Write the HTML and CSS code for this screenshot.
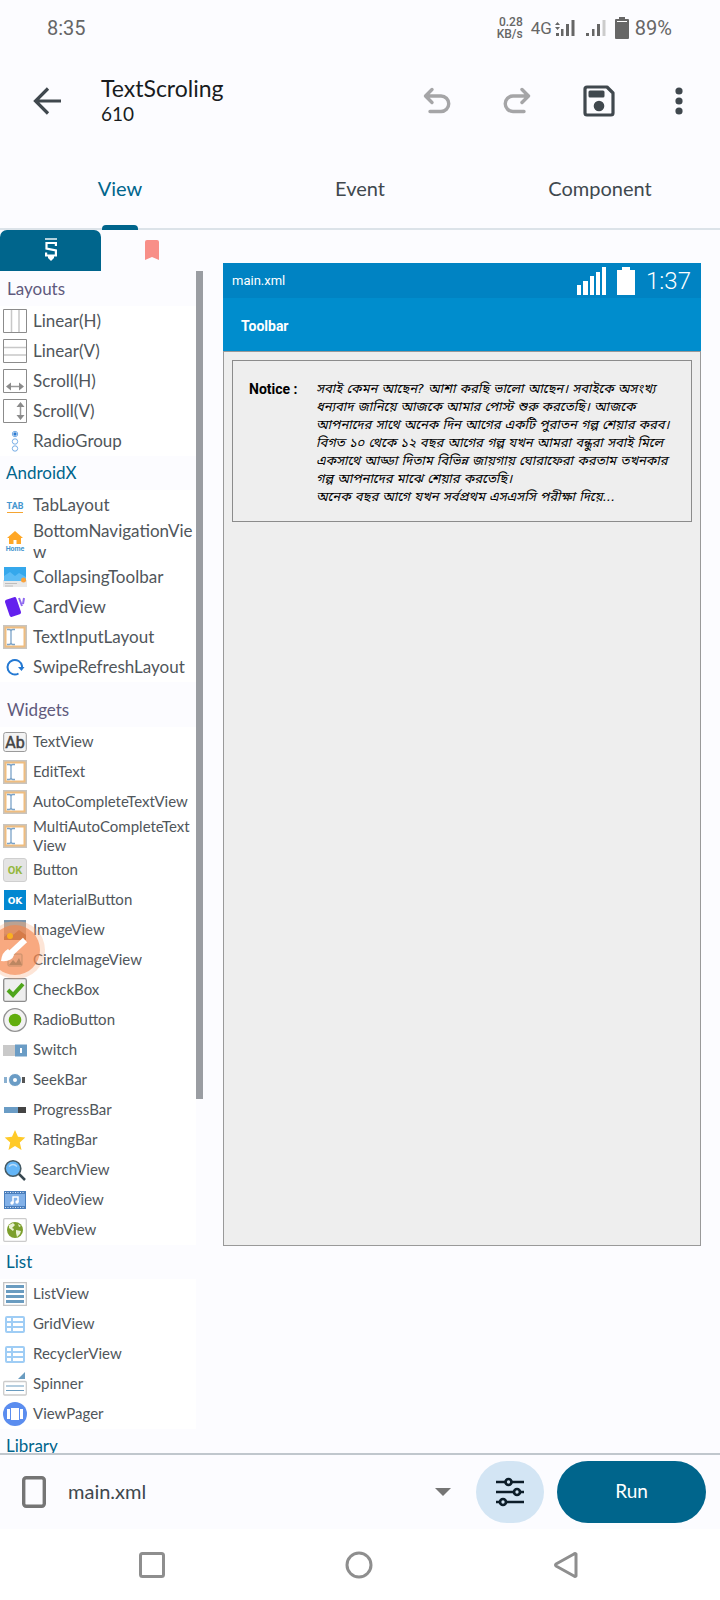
FILE: index.html
```html
<!DOCTYPE html>
<html lang="en">
<head>
<meta charset="utf-8">
<meta name="viewport" content="width=device-width, initial-scale=1">
<title>TextScroling</title>
<link rel="stylesheet" href="styles.css">
</head>
<body>
<svg class="defs" aria-hidden="true">
  <symbol id="field" viewBox="0 0 24 24"><path fill="#fff" stroke="#c9c5bf" stroke-width="2" d="M1 1h22v22H1z"/><path fill="none" stroke="#efbd80" stroke-width="2" d="M2.500 2.500h19v19h-19z"/><path fill="none" stroke="#7ba3c8" stroke-width="1.300" d="M4 4.500h2q2 0 2 2 0-2 2-2h2M8 6v12M4 19.500h2q2 0 2-2 0 2 2 2h2"/></symbol>
  <symbol id="grid" viewBox="0 0 24 24"><rect x="2" y="4" width="20" height="17" rx="2" fill="#9fcdf5"/><path fill="#fff" d="M4 6h4v3H4zM10 6h10v3H10zM4 11h4v3H4zM10 11h10v3H10zM4 16h4v3H4zM10 16h10v3H10z"/></symbol>
</svg>
<div class="screen">
  <header class="status">
    <span class="clock">8:35</span>
    <div class="status-right">
      <span class="speed">0.28<br>KB/s</span>
      <span class="net">4G</span>
      <svg width="20" height="18" viewBox="0 0 20 18"><path fill="#666" d="M2.500 3 0 6h5zM0 8h5l-2.500 3zM1 14h3v3H1zM6 10h2.500v7H6zM11 5h3v12h-3zM16.500 1h3v16h-3z"/></svg>
      <svg class="sim2" width="20" height="18" viewBox="0 0 20 18"><path fill="#666" d="M0 14h3v3H0zM6 10h2.500v7H6zM11 5h3v12h-3z"/><path fill="#ccc" d="M16.500 1h3v16h-3z"/></svg>
      <svg class="bat" width="14" height="22" viewBox="0 0 14 22"><path fill="#666" d="M4 0h6v2h3q1 0 1 1v18q0 1-1 1H1q-1 0-1-1V3q0-1 1-1h3z"/><path fill="#fff" d="M2 4h10v1H2z"/></svg>
      <span class="pct">89%</span>
    </div>
  </header>
  <div class="appbar">
    <button class="icon-btn back" aria-label="Back"><svg width="28" height="28" viewBox="0 0 28 28"><path fill="none" stroke="#40484e" stroke-width="3.200" d="M28 14H3M15 1.500 2.500 14 15 26.500"/></svg></button>
    <div class="title"><h1>TextScroling</h1><p>610</p></div>
    <div class="actions">
      <button class="icon-btn" aria-label="Undo"><svg width="28" height="28" viewBox="0 0 28 28"><path fill="none" stroke="#a5a5a7" stroke-width="3.400" stroke-linecap="round" stroke-linejoin="round" d="M9 2.500 2.500 9 9 15.500M3 9h15a7.500 7.500 0 0 1 0 15.500H7"/></svg></button>
      <button class="icon-btn" aria-label="Redo"><svg width="28" height="28" viewBox="0 0 28 28"><path fill="none" stroke="#a5a5a7" stroke-width="3.400" stroke-linecap="round" stroke-linejoin="round" d="M19 2.500 25.500 9 19 15.500M25 9H10a7.500 7.500 0 0 0 0 15.500h11"/></svg></button>
      <button class="icon-btn" aria-label="Save"><svg width="32" height="32" viewBox="0 0 32 32"><path fill="none" stroke="#40484e" stroke-width="3.200" stroke-linejoin="round" d="M4 2h20l6 6v20q0 2-2 2H4q-2 0-2-2V4q0-2 2-2z"/><rect x="5.500" y="5.500" width="16" height="7" rx="1.500" fill="#40484e"/><circle cx="16" cy="21" r="5.300" fill="#40484e"/></svg></button>
      <button class="icon-btn" aria-label="More"><svg width="8" height="28" viewBox="0 0 8 28"><g fill="#40484e"><circle cx="4" cy="4" r="3.600"/><circle cx="4" cy="14" r="3.600"/><circle cx="4" cy="24" r="3.600"/></g></svg></button>
    </div>
  </div>
  <nav class="tabs">
    <button class="tab active">View</button>
    <button class="tab">Event</button>
    <button class="tab">Component</button>
  </nav>
  <main class="work">
    <aside class="palette">
      <div class="ptabs">
        <button class="ptab on" aria-label="Components"><svg width="12" height="24" viewBox="0 0 12 24"><path fill="#b3d1dd" d="M0 0h12v2H0z"/><path fill="none" stroke="#fff" stroke-width="2.200" d="M10.900 8V5H1.500v5.500l9.400 2v5H1.100v-3"/><path fill="#fff" d="M3 18h6v2l-3 3-3-3z"/></svg></button>
        <button class="ptab" aria-label="Favorites"><svg width="14" height="20" viewBox="0 0 14 20"><path fill="#f88f88" d="M2 0h10q2 0 2 2v18l-7-3-7 3V2q0-2 2-2z"/></svg></button>
      </div>
      <div class="scroll">
        <div class="lists">
        <h2 class="plum">Layouts</h2>
        <ul>
          <li><svg viewBox="0 0 24 24"><path fill="#fff" stroke="#8b8b8b" d="M.5.5h23v23H.5z"/><path stroke="#c8c8c8" stroke-width="1.500" d="M8.500 1v22M16 1v22"/></svg><button>Linear(H)</button></li>
          <li><svg viewBox="0 0 24 24"><path fill="#fff" stroke="#8b8b8b" d="M.5.5h23v23H.5z"/><path stroke="#c8c8c8" stroke-width="1.500" d="M1 8.500h22M1 16h22"/></svg><button>Linear(V)</button></li>
          <li><svg viewBox="0 0 24 24"><path fill="#fff" stroke="#8b8b8b" d="M.5.5h23v23H.5z"/><path stroke="#999" stroke-width="1.500" d="M5 17.500h14"/><path fill="#8b8b8b" d="m3 17.500 5-4v8zM21 17.500l-5-4v8z"/></svg><button>Scroll(H)</button></li>
          <li><svg viewBox="0 0 24 24"><path fill="#fff" stroke="#8b8b8b" d="M.5.5h23v23H.5z"/><path stroke="#999" stroke-width="1.500" d="M17.500 5v14"/><path fill="#8b8b8b" d="m17.500 3-4 5h8zM17.500 21l-4-5h8z"/></svg><button>Scroll(V)</button></li>
          <li><svg viewBox="0 0 24 24"><g fill="none" stroke="#78aee6"><circle cx="12" cy="5" r="2.700"/><circle cx="12" cy="12.500" r="2.700"/><circle cx="12" cy="19.500" r="2.700"/></g><circle cx="12" cy="5" r="1.700" fill="#2878d0"/></svg><button>RadioGroup</button></li>
        </ul>
        <h2>AndroidX</h2>
        <ul>
          <li><svg viewBox="0 0 24 24"><text x="12" y="16" text-anchor="middle" class="t-tab">TAB</text><path fill="#f5a532" d="M4 19h16v1H4z"/></svg><button>TabLayout</button></li>
          <li class="tall"><svg viewBox="0 0 24 24"><path fill="#ffa726" d="m12 2 8 7h-2v6h-4.500v-4h-3v4H6V9H4z"/><text x="12" y="22" text-anchor="middle" class="t-home">Home</text></svg><button>BottomNavigationVie<br>w</button></li>
          <li><svg viewBox="0 0 24 24"><path fill="#e8e8e8" d="M0 15h24v7H0z"/><path fill="#35a8ec" d="M1 2h22v14H1z"/><path fill="#5cbcf5" d="m1 11 6-4 5 4 4-3 7 4v4H1z"/><circle cx="20.500" cy="15" r="2.500" fill="#f9a23b"/><path fill="#bdbdbd" d="M2 18h12v1H2zM2 20.500h8v1H2z"/></svg><button>CollapsingToolbar</button></li>
          <li><svg viewBox="0 0 24 24"><rect x="4" y="3" width="12" height="18" rx="2" fill="#6320ee" transform="rotate(-19 10 12)"/><path fill="none" stroke="#8e68f0" stroke-width="2" d="m16 3 3 8M21 3l-1 6"/></svg><button>CardView</button></li>
          <li><svg><use href="#field"/></svg><button>TextInputLayout</button></li>
          <li><svg viewBox="0 0 24 24"><path fill="none" stroke="#2378d2" stroke-width="2" d="M15.500 18.500A7.300 7.300 0 1 1 19 11v2"/><path fill="#2378d2" d="M15 12h6.500l-3 4z"/></svg><button>SwipeRefreshLayout</button></li>
        </ul>
        <h2 class="plum spaced">Widgets</h2>
        <ul class="small">
          <li><svg viewBox="0 0 24 24"><rect x=".7" y="2.500" width="22.600" height="19" rx="2" fill="#f3f3f3" stroke="#9a9a9a"/><text x="12" y="18" text-anchor="middle" class="t-ab">Ab</text></svg><button>TextView</button></li>
          <li><svg><use href="#field"/></svg><button>EditText</button></li>
          <li><svg><use href="#field"/></svg><button>AutoCompleteTextView</button></li>
          <li class="tall"><svg><use href="#field"/></svg><button>MultiAutoCompleteText<br>View</button></li>
          <li><svg viewBox="0 0 24 24"><rect x=".5" y=".5" width="23" height="23" rx="2.500" fill="#e4e4e4" stroke="#cfcfcf"/><text x="12" y="16" text-anchor="middle" class="t-ok">OK</text></svg><button>Button</button></li>
          <li><svg viewBox="0 0 24 24"><path fill="#0288d1" d="M1 2h22v20H1z"/><text x="12" y="16" text-anchor="middle" class="t-ok2">OK</text></svg><button>MaterialButton</button></li>
          <li><svg viewBox="0 0 24 24"><path fill="#7b95ab" d="M1 2h22v20H1z"/><path fill="#a4a3a0" d="M1 4h22v12H1z"/><path fill="#805838" d="m1 19 5-4 4 2 6-5 7 5v5H1z"/></svg><button>ImageView</button></li>
          <li><svg viewBox="0 0 24 24"><rect x="5" y="6" width="14" height="12" rx="1" fill="#d8eef4" stroke="#4a9fae"/><path fill="#258394" d="m6 17 4-5 3 3 3-5 3 7z"/></svg><button>CircleImageView</button></li>
          <li><svg viewBox="0 0 24 24"><rect x=".7" y=".7" width="22.600" height="22.600" rx="1.500" fill="#eee" stroke="#8d8d8d" stroke-width="1.300"/><path fill="none" stroke="#4fa51c" stroke-width="4" d="m5 12 5 5L20 6"/></svg><button>CheckBox</button></li>
          <li><svg viewBox="0 0 24 24"><circle cx="12" cy="12" r="11.300" fill="#f2f2f2" stroke="#929292" stroke-width="1.300"/><circle cx="12" cy="12" r="6.300" fill="#61ad0d"/></svg><button>RadioButton</button></li>
          <li><svg viewBox="0 0 24 24"><path fill="#c9c9c9" d="M0 7h12v11H0z"/><path fill="#6a9cc5" d="M12 6.500h12v12H12z"/><path fill="#fff" d="M17 10h2v5h-2z"/></svg><button>Switch</button></li>
          <li><svg viewBox="0 0 24 24"><path fill="#8ab0d0" d="M1 9h3v6H1z"/><path fill="#555" d="M19 9h3v6h-3z"/><circle cx="12" cy="12" r="6.500" fill="#6a9cc5" stroke="#fff"/><circle cx="12" cy="12" r="2" fill="#fff"/></svg><button>SeekBar</button></li>
          <li><svg viewBox="0 0 24 24"><path fill="#6a9cc5" d="M1 9h14v6H1z"/><path fill="#444" d="M15 9h8v6h-8z"/></svg><button>ProgressBar</button></li>
          <li><svg viewBox="0 0 24 24"><path fill="#ffca28" d="m12 2 3 6.800 7.300.7-5.500 4.900L18.500 22 12 18l-6.500 4 1.700-7.600L1.700 9.500 9 8.800z"/></svg><button>RatingBar</button></li>
          <li><svg viewBox="0 0 24 24"><path stroke="#37474f" stroke-width="2.500" d="m15 15 7 7"/><circle cx="10" cy="10.500" r="7.800" fill="#64b5f6" stroke="#455a64" stroke-width="1.600"/><path fill="none" stroke="#bbdefb" stroke-width="1.300" d="M6 8.500q4-4 8 0"/></svg><button>SearchView</button></li>
          <li><svg viewBox="0 0 24 24"><path fill="#4a7ebc" d="M1 3h22v18H1z"/><path fill="#82b1e8" d="M2 6h20v12H2z"/><path stroke="#dce9f7" stroke-dasharray="1 1.500" d="M2 4.500h20M2 19.500h20"/><path fill="none" stroke="#fff" stroke-width="1.500" d="M10 15V9h5v5"/><circle cx="9" cy="15" r="1.700" fill="#fff"/><circle cx="14" cy="14" r="1.700" fill="#fff"/></svg><button>VideoView</button></li>
          <li><svg viewBox="0 0 24 24"><rect x=".7" y=".7" width="22.600" height="22.600" rx="1" fill="#fff" stroke="#ccc" stroke-width="1.300"/><circle cx="12" cy="12" r="8" fill="#7c9f2c"/><path fill="#eaf2d4" d="m6 7 4-2 2 2-3 3 2 1-1 2-4-3zM13 12l5 1-1 3-3 3-1-4zM15 6l3 2-2 1z"/></svg><button>WebView</button></li>
        </ul>
        <h2>List</h2>
        <ul class="small">
          <li><svg viewBox="0 0 24 24"><path fill="#fff" stroke="#c4c4c4" stroke-width="1.300" d="M.7.7h22.600v22.600H.7z"/><path stroke="#6a9cc0" stroke-width="3" d="M3 4.500h18M3 9.500h18M3 14.500h18M3 19.500h18"/></svg><button>ListView</button></li>
          <li><svg><use href="#grid"/></svg><button>GridView</button></li>
          <li><svg><use href="#grid"/></svg><button>RecyclerView</button></li>
          <li><svg viewBox="0 0 24 24"><path fill="#6a9cc0" d="M22 0v7h-7z"/><rect x=".7" y="9.500" width="22.600" height="13.500" rx="1" fill="#fff" stroke="#ccc" stroke-width="1.300"/><path stroke="#6a9cc0" stroke-width="1.200" d="M3 14h18M3 18.500h18"/></svg><button>Spinner</button></li>
          <li><svg viewBox="0 0 24 24"><circle cx="12" cy="12" r="12" fill="#5b8def"/><path fill="#fff" d="M4 7h3v10H4zM8 6h8v12H8zM17 7h3v10h-3z"/></svg><button>ViewPager</button></li>
        </ul>
        <h2>Library</h2>
        </div>
        <div class="track"><div class="thumb"></div></div>
      </div>
    </aside>
    <section class="canvas">
      <div class="device">
        <div class="dstatus">
          <span class="dfile">main.xml</span>
          <svg width="29" height="28" viewBox="0 0 29 28"><path fill="#fff" d="M0 18h4v10H0zM6 14h5v14H6zM13 9h4v19h-4zM19 5h4v23h-4zM25 0h4v28h-4z"/></svg>
          <svg width="18" height="28" viewBox="0 0 18 28"><path fill="#fff" d="M5 0h8v3h5v25H0V3h5z"/></svg>
          <span class="dclock">1:37</span>
        </div>
        <div class="dtoolbar">Toolbar</div>
        <div class="dbody">
          <div class="notice">
            <strong>Notice :</strong>
            <p lang="bn">সবাই কেমন আছেন? আশা করছি ভালো আছেন। সবাইকে অসংখ্য<br>ধন্যবাদ জানিয়ে আজকে আমার পোস্ট শুরু করতেছি। আজকে<br>আপনাদের সাথে অনেক দিন আগের একটি পুরাতন গল্প শেয়ার করব।<br>বিগত ১০ থেকে ১২ বছর আগের গল্প যখন আমরা বন্ধুরা সবাই মিলে<br>একসাথে আড্ডা দিতাম বিভিন্ন জায়গায় ঘোরাফেরা করতাম তখনকার<br>গল্প আপনাদের মাঝে শেয়ার করতেছি।<br>অনেক বছর আগে যখন সর্বপ্রথম এসএসসি পরীক্ষা দিয়ে...</p>
          </div>
        </div>
      </div>
    </section>
    <svg class="bubble" width="46" height="58" viewBox="0 0 46 58" aria-hidden="true"><circle cx="16" cy="29" r="29" fill="#f9a070" opacity=".28"/><circle cx="15" cy="29" r="25" fill="#f5854a" opacity=".62"/><circle cx="10" cy="15" r="3" fill="#fbb020"/><path stroke="#fff" stroke-width="6" d="M25 19 11 32"/><path fill="#fff" d="m8 28 6 6q-2 7-13 6 1-9 7-12z"/></svg>
  </main>
  <footer class="bottom">
    <svg width="24" height="32" viewBox="0 0 24 32"><rect x="1.700" y="1.700" width="20.600" height="28.600" rx="2.500" fill="none" stroke="#757575" stroke-width="3.400"/></svg>
    <select class="file" aria-label="File"><option>main.xml</option></select>
    <svg class="caret" width="16" height="8" viewBox="0 0 16 8"><path fill="#757575" d="M0 0h16L8 8z"/></svg>
    <button class="config" aria-label="Options"><svg width="30" height="30" viewBox="0 0 30 30"><g fill="#d3e5f4" stroke="#0c1d29" stroke-width="2.700"><path d="M1 5h28M1 15h28M1 25h28"/><circle cx="13.500" cy="5" r="3"/><circle cx="22" cy="15" r="3"/><circle cx="8" cy="25" r="3"/></g></svg></button>
    <button class="run">Run</button>
  </footer>
  <nav class="sysnav">
    <button aria-label="Recents"><svg width="28" height="28" viewBox="0 0 28 28"><rect x="2.500" y="2.500" width="23" height="23" rx="2" fill="none" stroke="#8e8e8e" stroke-width="3"/></svg></button>
    <button aria-label="Home"><svg width="28" height="28" viewBox="0 0 28 28"><circle cx="14" cy="14" r="12" fill="none" stroke="#8e8e8e" stroke-width="3"/></svg></button>
    <button aria-label="Back"><svg width="28" height="28" viewBox="0 0 28 28"><path fill="none" stroke="#8e8e8e" stroke-width="3" stroke-linejoin="round" d="M24 3v22q-1 1-2 0L4 15q-1-1 0-2L22 3q1-1 2 0z"/></svg></button>
  </nav>
</div>
</body>
</html>
```
FILE: styles.css
```css
* { box-sizing: border-box; }
body { margin: 0; background: #fcfcff; font-family: Lato, "Noto Sans", sans-serif; color: #40484e; }
button, select { font: inherit; color: inherit; border: 0; background: none; padding: 0; margin: 0; }
h1, h2, p, ul { margin: 0; padding: 0; font-weight: 400; }
svg { display: block; flex: none; }
.defs { width: 0; height: 0; position: absolute; }
.screen { height: 100vh; display: flex; flex-direction: column; }

.status { flex: none; height: 56px; display: flex; justify-content: space-between; align-items: center; padding: 0 48px 0 47px; font-family: Roboto, sans-serif; font-size: 20px; color: #666; }
.status-right { display: flex; align-items: center; }
.speed { font-size: 12px; line-height: 12px; font-weight: 500; text-align: right; margin-right: 8px; }
.net { font-size: 17px; margin-right: 3px; }
.sim2 { margin-left: 11px; }
.bat { margin: 0 6px 0 9px; }

.appbar { flex: none; height: 90px; display: flex; align-items: center; padding: 0 37px 0 33px; }
.icon-btn { display: flex; justify-content: center; align-items: center; }
.title { flex: 1; margin-left: 40px; padding-bottom: 2px; color: #191c1e; }
.title h1 { font-size: 23px; line-height: 28px; }
.title p { font-size: 19px; line-height: 24px; }
.actions { display: flex; align-items: center; gap: 52px; }
.actions .icon-btn:last-child { margin-left: 8px; }

.tabs { flex: none; height: 84px; display: grid; grid-template-columns: repeat(3, 1fr); border-bottom: 2px solid #dce3e9; }
.tab { font-size: 20px; position: relative; padding-top: 2px; }
.tab.active { color: #00658c; }
.tab.active::after { content: ""; position: absolute; left: 50%; bottom: -2px; width: 36px; height: 5px; margin-left: -18px; border-radius: 4px 4px 0 0; background: #00658c; }

.work { flex: 1; min-height: 0; display: flex; overflow: hidden; position: relative; }
.palette { flex: none; width: 203px; display: flex; flex-direction: column; }
.ptabs { flex: none; height: 41px; display: grid; grid-template-columns: 1fr 1fr; padding-right: 1px; }
.ptab { display: flex; justify-content: center; align-items: center; border-radius: 7px 7px 0 0; padding-bottom: 1px; }
.ptab.on { background: #00658c; }
.scroll { flex: 1; min-height: 0; display: flex; overflow: hidden; }
.lists { flex: 1; min-width: 0; }
.track { width: 7px; flex: none; }
.thumb { height: 828px; background: #9a9da2; }
h2 { font-size: 17px; line-height: 34px; padding-left: 6px; color: #00658c; }
h2.plum { color: #605a7d; line-height: 35px; padding-left: 7px; }
h2.spaced { padding-top: 10px; }
ul { list-style: none; background: #fff; }
li { height: 30px; display: flex; align-items: center; gap: 6px; padding-left: 3px; white-space: nowrap; }
li svg { width: 24px; height: 24px; }
li button { font-size: 17px; line-height: 21px; text-align: left; color: #50565b; padding-bottom: 2px; }
li.tall { height: 42px; }
li.tall button { padding-bottom: 0; }
.small button { font-size: 15px; line-height: 19px; }
.small li.tall { height: 38px; }
.t-tab { font: bold 9px Roboto, sans-serif; fill: #4596cf; }
.t-home { font: bold 7px Roboto, sans-serif; fill: #4596cf; }
.t-ab { font: 16px Roboto, sans-serif; fill: #444; stroke: #444; stroke-width: 0.5; }
.t-ok { font: bold 11px Roboto, sans-serif; fill: #95b83f; }
.t-ok2 { font: bold 9px "DejaVu Sans", sans-serif; fill: #fff; }
.bubble { position: absolute; left: 0; top: 691px; }

.canvas { flex: 1; min-width: 0; padding: 33px 19px 207px 20px; display: flex; }
.device { flex: 1; min-width: 0; display: flex; flex-direction: column; font-family: Roboto, sans-serif; }
.dstatus { height: 35px; flex: none; background: #0083c3; color: #fff; display: flex; align-items: center; gap: 11px; padding: 0 10px 0 9px; }
.dfile { flex: 1; font-size: 13px; }
.dclock { font-size: 24px; font-weight: 300; }
.dtoolbar { height: 53px; flex: none; background: #008dcd; color: #fff; font-size: 14px; font-weight: 700; line-height: 56px; padding-left: 18px; }
.dbody { flex: 1; background: #eee; border: 1px solid #999; padding: 8px; }
.notice { border: 1px solid #8b8b8b; display: flex; align-items: flex-start; gap: 17px; padding: 19px 12px 16px 16px; height: 162px; color: #000; }
.notice strong { font-size: 14px; line-height: 18px; white-space: nowrap; width: 50px; }
.notice p { font-family: "DejaVu Sans", "Noto Sans Bengali", sans-serif; font-size: 13px; line-height: 18px; font-style: italic; white-space: nowrap; }

.bottom { flex: none; height: 76px; border-top: 2px solid #c0c7cd; display: flex; align-items: center; padding: 0 14px 0 22px; }
.file { flex: 1; min-width: 0; appearance: none; margin-left: 22px; font-size: 20px; height: 56px; padding: 0 24px 3px 0; }
.caret { margin-right: 25px; }
.config { width: 68px; height: 62px; border-radius: 31px; background: #d3e5f4; display: flex; align-items: center; justify-content: center; margin-right: 13px; }
.run { width: 149px; height: 62px; border-radius: 31px; background: #00658c; color: #fff; font-size: 19px; padding-bottom: 3px; }
.sysnav { flex: none; height: 71px; background: #fff; display: flex; justify-content: space-between; align-items: center; padding: 0 140px 0 138px; }
```
